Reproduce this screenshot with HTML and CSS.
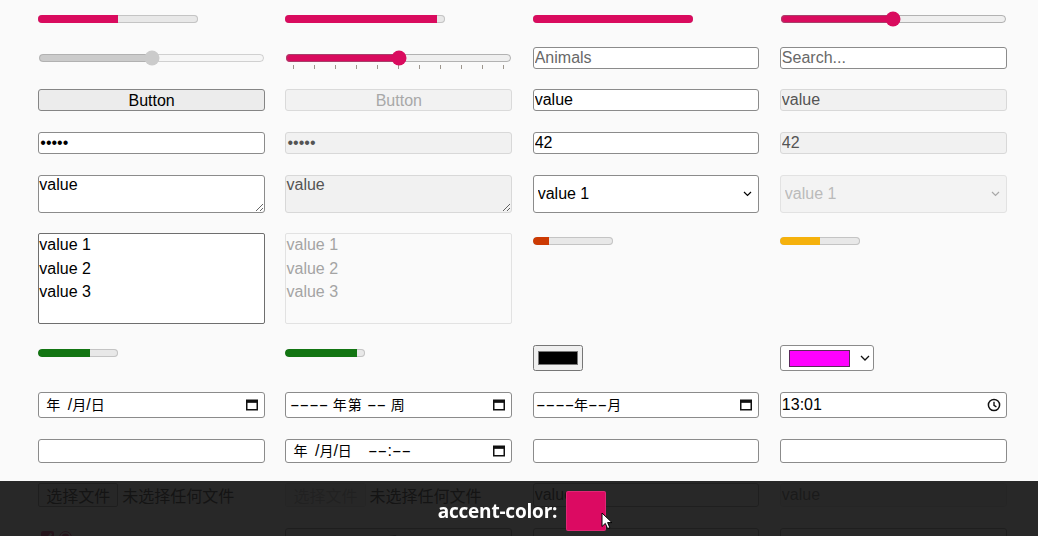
FILE: index.html
```html
<!DOCTYPE html>
<html lang="zh-CN">
<head>
<meta charset="utf-8">
<title>accent-color</title>
<link rel="stylesheet" href="styles.css">
</head>
<body>
<main class="grid">
  <!-- row 1 -->
  <progress class="prog" value="50" max="100"></progress>
  <progress class="prog" value="95" max="100"></progress>
  <progress class="prog full" value="100" max="100"></progress>
  <input class="range" type="range" value="50">

  <!-- row 2 -->
  <input class="range" type="range" value="50" disabled>
  <input class="range" type="range" value="50" list="tickmarks">
  <input class="field" list="animals" placeholder="Animals">
  <input class="field search" type="search" placeholder="Search...">

  <!-- row 3 -->
  <button class="btn" type="button">Button</button>
  <button class="btn" type="button" disabled>Button</button>
  <input class="field" type="text" value="value">
  <input class="field" type="text" value="value" disabled>

  <!-- row 4 -->
  <input class="field" type="password" value="12345">
  <input class="field" type="password" value="12345" disabled>
  <input class="field" type="number" value="42">
  <input class="field" type="number" value="42" disabled>

  <!-- row 5 -->
  <textarea class="field area">value</textarea>
  <textarea class="field area" disabled>value</textarea>
  <div class="sel-wrap">
    <select class="sel"><option>value 1</option><option>value 2</option><option>value 3</option></select>
    <svg class="chev" width="9" height="6" viewBox="0 0 9 6"><path d="M1 1L4.5 4.5L8 1" fill="none" stroke="#000" stroke-width="1.2"/></svg>
  </div>
  <div class="sel-wrap">
    <select class="sel" disabled><option>value 1</option><option>value 2</option><option>value 3</option></select>
    <svg class="chev" width="9" height="6" viewBox="0 0 9 6"><path d="M1 1L4.5 4.5L8 1" fill="none" stroke="#a8a8a8" stroke-width="1.2"/></svg>
  </div>

  <!-- row 6 -->
  <select class="list" multiple><option>value 1</option><option>value 2</option><option>value 3</option></select>
  <select class="list" multiple disabled><option>value 1</option><option>value 2</option><option>value 3</option></select>
  <meter class="meter" min="0" max="100" low="33" high="66" optimum="80" value="20"></meter>
  <meter class="meter" min="0" max="100" low="33" high="66" optimum="80" value="50"></meter>

  <!-- row 7 -->
  <meter class="meter" min="0" max="100" value="65"></meter>
  <meter class="meter" min="0" max="100" value="89"></meter>
  <input class="color" type="color" value="#000000">
  <div class="color-box">
    <span class="color-sw"></span>
    <svg class="chev-c" width="10" height="6" viewBox="0 0 10 6"><path d="M1 1L5 5L9 1" fill="none" stroke="#111" stroke-width="1.3"/></svg>
  </div>

  <!-- row 8 -->
  <div class="dt">
    <span class="dtv pad8"><span class="cj yr">年</span> /<span class="cj">月</span>/<span class="cj">日</span></span>
    <svg class="ico" width="14" height="14" viewBox="0 0 14 14"><rect x="1.75" y="2.25" width="10.5" height="9.5" fill="none" stroke="#111" stroke-width="1.5"/><rect x="1.75" y="2.25" width="10.5" height="2.6" fill="#111"/></svg>
  </div>
  <div class="dt">
    <span class="dtv pad3"><span class="dash d4">----</span> <span class="cj wk">年第</span> <span class="dash d2">--</span> <span class="cj">周</span></span>
    <svg class="ico" width="14" height="14" viewBox="0 0 14 14"><rect x="1.75" y="2.25" width="10.5" height="9.5" fill="none" stroke="#111" stroke-width="1.5"/><rect x="1.75" y="2.25" width="10.5" height="2.6" fill="#111"/></svg>
  </div>
  <div class="dt">
    <span class="dtv pad2"><span class="dash d4">----</span><span class="cj">年</span><span class="dash d2">--</span><span class="cj">月</span></span>
    <svg class="ico" width="14" height="14" viewBox="0 0 14 14"><rect x="1.75" y="2.25" width="10.5" height="9.5" fill="none" stroke="#111" stroke-width="1.5"/><rect x="1.75" y="2.25" width="10.5" height="2.6" fill="#111"/></svg>
  </div>
  <div class="dt">
    <span class="dtv time">13:01</span>
    <svg class="ico" width="14" height="14" viewBox="0 0 14 14"><circle cx="7" cy="7" r="5.6" fill="none" stroke="#111" stroke-width="1.5"/><path d="M7 3.8V7.3L9.4 8.8" fill="none" stroke="#111" stroke-width="1.4"/></svg>
  </div>

  <!-- row 9 -->
  <input class="field" type="text">
  <div class="dt">
    <span class="dtv pad8"><span class="cj yr">年</span> /<span class="cj">月</span>/<span class="cj">日</span> <span class="hm"><span class="dash d2">--</span>:<span class="dash d2">--</span></span></span>
    <svg class="ico" width="14" height="14" viewBox="0 0 14 14"><rect x="1.75" y="2.25" width="10.5" height="9.5" fill="none" stroke="#111" stroke-width="1.5"/><rect x="1.75" y="2.25" width="10.5" height="2.6" fill="#111"/></svg>
  </div>
  <input class="field" type="text">
  <input class="field" type="text">

  <!-- row 10 -->
  <div class="file"><span class="file-btn">选择文件</span><span class="file-txt">未选择任何文件</span></div>
  <div class="file is-disabled"><span class="file-btn">选择文件</span><span class="file-txt">未选择任何文件</span></div>
  <input class="field" type="email" value="value">
  <input class="field" type="email" value="value" disabled>

  <!-- row 11 -->
  <div class="checks"><input class="chk" type="checkbox" checked><input class="chk" type="radio" checked></div>
  <button class="btn" type="reset">重置</button>
  <input class="field" type="text">
  <input class="field" type="text">
</main>

<datalist id="tickmarks">
  <option value="0"></option><option value="10"></option><option value="20"></option>
  <option value="30"></option><option value="40"></option><option value="50"></option>
  <option value="60"></option><option value="70"></option><option value="80"></option>
  <option value="90"></option><option value="100"></option>
</datalist>
<datalist id="animals"><option value="Cat"></option><option value="Dog"></option></datalist>

<div class="overlay">
  <span class="ac-label">accent-color:</span>
  <span class="swatch">
    <svg class="cursor" width="12" height="18" viewBox="0 0 12 18"><path d="M1 1V14.5L4.3 11.4L6.6 16.6L8.8 15.6L6.6 10.6H11Z" fill="#fff" stroke="#000" stroke-width="1" stroke-linejoin="round"/></svg>
  </span>
</div>
</body>
</html>
```
FILE: styles.css
```css
:root {
  accent-color: #d90b5e;
}

html, body {
  margin: 0;
  height: 536px;
  overflow: hidden;
}

body {
  background: #fafafa;
  font: 16px "Liberation Sans", "Noto Sans CJK SC", sans-serif;
  color: #000;
}

.grid {
  display: grid;
  grid-template-columns: repeat(4, 226.7px);
  grid-template-rows: 15px 22px 22px 22px 38px 91px 26px 26px 24px 24px 24px;
  column-gap: 20.5px;
  row-gap: 20.7px;
  padding: 11px 0 0 38.3px;
  align-items: center;
  justify-items: start;
}

/* progress */
.prog {
  -webkit-appearance: none;
  appearance: none;
  width: 160px;
  height: 8px;
  margin: 1px 0 0;
  border: 0;
  background: transparent;
}

.prog::-webkit-progress-bar {
  background: #e8e8e8;
  box-shadow: inset 0 0 0 1px #c4c4c4;
  border-radius: 4px;
}

.prog::-webkit-progress-value {
  background: #d90b5e;
  border-radius: 4px 0 0 4px;
}

.prog.full::-webkit-progress-value {
  border-radius: 4px;
}

/* meter */
.meter {
  -webkit-appearance: none;
  appearance: none;
  width: 80px;
  height: 8px;
  margin: 4px 0 0;
  align-self: start;
  background: transparent;
}

.meter::-webkit-meter-bar {
  height: 8px;
  border: 0;
  background: #e8e8e8;
  box-shadow: inset 0 0 0 1px #c4c4c4;
  border-radius: 4px;
}

.meter::-webkit-meter-optimum-value {
  background: #127512;
  border-radius: 4px 0 0 4px;
}

.meter::-webkit-meter-suboptimum-value {
  background: #f5b10c;
  border-radius: 4px 0 0 4px;
}

.meter::-webkit-meter-even-less-good-value {
  background: #cc3a03;
  border-radius: 4px 0 0 4px;
}

/* range */
.range {
  width: 100%;
  margin: 0;
}

/* text-like fields */
.field {
  box-sizing: border-box;
  width: 100%;
  height: 100%;
  margin: 0;
  padding: 0 1px;
  border: 1px solid #8b8b8b;
  border-radius: 3px;
  background: #fff;
  font: inherit;
  color: #000;
}

.field::placeholder {
  color: #686868;
}

.field:disabled {
  border-color: #d8d8d8;
  background: #f1f1f1;
  color: #545454;
}

.search {
  -webkit-appearance: none;
  appearance: none;
}

.area {
  resize: both;
  padding: 0;
}

.btn {
  box-sizing: border-box;
  width: 100%;
  height: 100%;
  margin: 0;
  padding: 1px 0 0;
  border: 1px solid #858585;
  border-radius: 3px;
  background: #ececec;
  font: inherit;
  color: #000;
}

.btn:disabled {
  border-color: #dadada;
  background: #f2f2f2;
  color: #a8a8a8;
}

/* select */
.sel-wrap {
  position: relative;
  width: 100%;
  height: 100%;
}

.sel {
  -webkit-appearance: none;
  appearance: none;
  box-sizing: border-box;
  width: 100%;
  height: 100%;
  margin: 0;
  padding: 0 0 0 4px;
  border: 1px solid #8b8b8b;
  border-radius: 3px;
  background: #fff;
  font: inherit;
  color: #000;
}

.sel:disabled {
  border-color: #d8d8d8;
  background: #f1f1f1;
  color: #a0a0a0;
}

.chev {
  position: absolute;
  right: 7px;
  top: 16px;
}

.list {
  box-sizing: border-box;
  width: 100%;
  height: 100%;
  margin: 0;
  padding: 0;
  border: 1px solid #6e6e6e;
  border-radius: 2px;
  background: #fff;
  font: inherit;
  color: #000;
  overflow: hidden;
}

.list option {
  padding: 2px 0;
}

.list:disabled {
  border-color: #d8d8d8;
  background: #fafafa;
  color: #a0a0a0;
}

/* color */
.color {
  box-sizing: border-box;
  width: 50px;
  height: 26px;
  margin: 0;
}

.color-box {
  box-sizing: border-box;
  width: 94px;
  height: 26px;
  display: flex;
  align-items: center;
  gap: 10px;
  padding: 0 0 0 8px;
  border: 1px solid #8b8b8b;
  border-radius: 3px;
  background: #fff;
}

.color-sw {
  box-sizing: border-box;
  width: 61px;
  height: 17px;
  background: #ff00ff;
  border: 1px solid #5a2a5a;
}

.chev-c {
  display: block;
}

/* date / time like fields */
.dt {
  box-sizing: border-box;
  width: 100%;
  height: 100%;
  display: flex;
  align-items: center;
  justify-content: space-between;
  padding: 0 5px 0 0;
  border: 1px solid #8b8b8b;
  border-radius: 3px;
  background: #fff;
}

.dtv {
  white-space: pre;
  font-size: 16px;
  line-height: 20px;
}

.cj {
  font-family: "Noto Sans CJK SC", sans-serif;
  font-size: 14px;
}

.yr {
  margin-right: 3px;
}

.wk {
  letter-spacing: 1px;
}

.hm {
  margin-left: 12px;
}

.dash {
  display: inline-block;
  transform: scaleX(1.8);
  transform-origin: 0 50%;
}

.d4 {
  margin-right: 17px;
}

.d2 {
  margin-right: 8.5px;
}

.pad8 {
  padding-left: 7px;
}

.pad3 {
  padding-left: 3.5px;
}

.pad2 {
  padding-left: 2px;
}

.time {
  padding-left: 1px;
}

.ico {
  display: block;
  flex: none;
}

/* file inputs */
.file {
  display: flex;
  align-items: center;
  height: 100%;
  white-space: nowrap;
}

.file-btn {
  box-sizing: border-box;
  height: 100%;
  display: flex;
  align-items: center;
  padding: 0 7px;
  border: 1px solid #858585;
  border-radius: 2px;
  background: #ececec;
}

.file-txt {
  margin-left: 4px;
}

.file.is-disabled .file-btn {
  border-color: #dadada;
  background: #f2f2f2;
  color: #a8a8a8;
}

.checks {
  align-self: start;
  display: flex;
}

.chk {
  margin: 3px 2px 0 3px;
}

/* overlay bar */
.overlay {
  position: fixed;
  left: 0;
  right: 0;
  bottom: 0;
  height: 55px;
  box-sizing: border-box;
  padding: 5px 0 0 6px;
  background: rgba(22, 22, 22, 0.92);
  display: flex;
  justify-content: center;
  align-items: center;
  gap: 9px;
}

.ac-label {
  font: 700 19px "Open Sans", "Noto Sans", sans-serif;
  color: #fff;
  letter-spacing: -0.2px;
}

.swatch {
  position: relative;
  width: 40px;
  height: 40px;
  border-radius: 2px;
  background: #dc0a62;
  box-shadow: inset 0 0 0 1px rgba(255, 255, 255, 0.12);
}

.cursor {
  position: absolute;
  left: 35px;
  top: 21px;
}
```
